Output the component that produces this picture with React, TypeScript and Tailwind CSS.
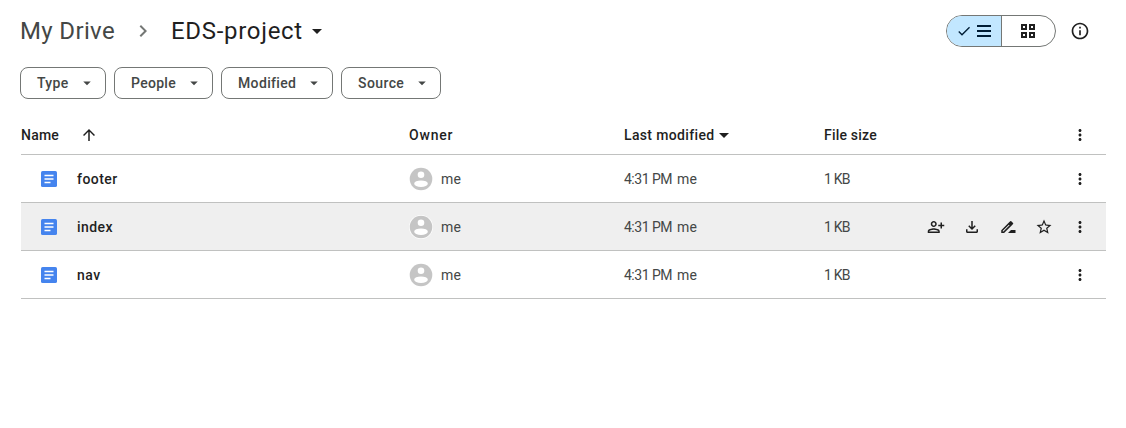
import type { ReactNode } from "react";

function Icon({ d, className = "size-5" }: { d: string; className?: string }) {
  return (
    <svg viewBox="0 0 24 24" className={`shrink-0 ${className}`} fill="currentColor" aria-hidden="true">
      <path fillRule="evenodd" d={d} />
    </svg>
  );
}

const icons = {
  caret: "M7 10l5 5 5-5z",
  more: "M12 8c1.1 0 2-.9 2-2s-.9-2-2-2-2 .9-2 2 .9 2 2 2zm0 2c-1.1 0-2 .9-2 2s.9 2 2 2 2-.9 2-2-.9-2-2-2zm0 6c-1.1 0-2 .9-2 2s.9 2 2 2 2-.9 2-2-.9-2-2-2z",
  chevron: "M10 6 8.59 7.41 13.17 12l-4.58 4.59L10 18l6-6z",
  check: "M9 16.17 4.83 12l-1.42 1.41L9 19 21 7l-1.41-1.41z",
  arrowUp: "m4 12 1.41 1.41L11 7.83V20h2V7.83l5.58 5.59L20 12l-8-8-8 8z",
  info: "M11 7h2v2h-2zm0 4h2v6h-2zm1-9C6.48 2 2 6.48 2 12s4.48 10 10 10 10-4.48 10-10S17.52 2 12 2zm0 18c-4.41 0-8-3.59-8-8s3.59-8 8-8 8 3.59 8 8-3.59 8-8 8z",
  share:
    "M13 8c0-2.21-1.79-4-4-4S5 5.79 5 8s1.79 4 4 4 4-1.79 4-4zm-2 0c0 1.1-.9 2-2 2s-2-.9-2-2 .9-2 2-2 2 .9 2 2zM1 17.2V20h16v-2.8c0-2.4-5.33-3.7-8-3.7s-8 1.3-8 3.7zM3 18v-.7c.3-.8 3.3-1.8 6-1.8s5.7 1 6 1.8v.7zM20 14v-3h3V9h-3V6h-2v3h-3v2h3v3z",
  download:
    "M18 15v3H6v-3H4v3c0 1.1.9 2 2 2h12c1.1 0 2-.9 2-2v-3h-2zm-1-4-1.41-1.41L13 12.17V4h-2v8.17L8.41 9.59 7 11l5 5 5-5z",
  rename:
    "M16 16l-4 4h10v-4zM13.2 6.1 3 16.25V20h3.75L16.9 9.85zM5.92 18H5v-.92l8.2-8.2.92.92zM18.71 8.04a.996.996 0 0 0 0-1.41l-2.34-2.34a1.001 1.001 0 0 0-1.41 0L13.2 6.1l3.75 3.75z",
  star: "m22 9.24-7.19-.62L12 2 9.19 8.63 2 9.24l5.46 4.73L5.82 21 12 17.27 18.18 21l-1.63-7.03L22 9.24zM12 15.4l-3.76 2.27 1-4.28-3.32-2.88 4.38-.38L12 6.1l1.71 4.04 4.38.38-3.32 2.88 1 4.28L12 15.4z",
};

function Chip({ label, className }: { label: string; className: string }) {
  return (
    <button
      className={`flex h-8 items-center justify-between rounded-lg border border-[#747775] pr-[9px] pl-4 text-sm font-[470] text-[#444746] ${className}`}
    >
      {label}
      <Icon d={icons.caret} className="size-[18px]" />
    </button>
  );
}

function DocIcon() {
  return (
    <svg viewBox="0 0 16 16" className="size-4 shrink-0" aria-hidden="true">
      <rect width="16" height="16" rx="1.6" fill="#4584ee" />
      <path d="M3.5 4.5h9M3.5 8h9M3.5 11.5h6" stroke="#fff" strokeWidth="1.5" />
    </svg>
  );
}

function Avatar() {
  return (
    <svg viewBox="0 0 24 24" className="size-6 shrink-0" aria-hidden="true">
      <circle cx="12" cy="12" r="12" fill="#fff" />
      <circle cx="12" cy="12" r="11.3" fill="#c5c5c5" />
      <circle cx="12" cy="7.7" r="3.3" fill="#fff" />
      <ellipse cx="12" cy="16.7" rx="6.8" ry="3.3" fill="#fff" />
    </svg>
  );
}

function Action({ children }: { children: ReactNode }) {
  return <span className="flex w-9 justify-center">{children}</span>;
}

const columns = "grid grid-cols-[388px_215px_200px_1fr] items-center border-b border-[#c0c1c0] text-sm";

function FileRow({ name, active = false }: { name: string; active?: boolean }) {
  return (
    <div className={`h-12 ${columns} ${active ? "bg-[#efefef]" : ""}`}>
      <div className="flex items-center gap-5 pl-5 font-[470] text-[#1f1f1f]">
        <DocIcon />
        <span className="tracking-[0.45px]">{name}</span>
      </div>
      <div className="flex items-center gap-2 text-[#444746]">
        <Avatar />
        <span className="tracking-[0.2px]">me</span>
      </div>
      <div className="flex text-[#444746]">
        <span className="w-[53px] tracking-[-0.5px] whitespace-nowrap">4:31 PM</span>
        <span className="tracking-[0.2px]">me</span>
      </div>
      <div className="flex items-center justify-between pr-2">
        <span className="tracking-[-0.8px] text-[#444746]">1 KB</span>
        <div className="flex text-[#1f1f1f]">
          {active && (
            <>
              <Action><Icon d={icons.share} className="size-[18px]" /></Action>
              <Action><Icon d={icons.download} className="size-[18px]" /></Action>
              <Action><Icon d={icons.rename} className="size-[18px]" /></Action>
              <Action><Icon d={icons.star} className="size-[18px]" /></Action>
            </>
          )}
          <Action><Icon d={icons.more} className="size-[18px]" /></Action>
        </div>
      </div>
    </div>
  );
}

export default function App() {
  return (
    <main className="h-[428px] bg-white pl-5 font-['Roboto','Noto_Sans',sans-serif]">
      <header className="flex h-[62px] items-center justify-between pr-9">
        <nav className="flex items-center text-2xl">
          <span className="w-[111px] tracking-[0.35px] whitespace-nowrap text-[#444746]">My Drive</span>
          <Icon d={icons.chevron} className="size-6 text-[#747775]" />
          <span className="ml-4 w-[134px] tracking-[0.7px] whitespace-nowrap text-[#1f1f1f]">EDS-project</span>
          <Icon d={icons.caret} className="size-6 text-[#1f1f1f]" />
        </nav>
        <div className="flex items-center gap-3.5">
          <div className="flex h-8 w-[110px] overflow-hidden rounded-full border border-[#747775]">
            <div className="flex w-[55px] items-center gap-[5px] border-r border-[#747775] bg-[#c2e7ff] pl-[9px] text-[#001d35]">
              <Icon d={icons.check} className="size-4" />
              <svg viewBox="0 0 14 12" className="h-3 w-3.5" aria-hidden="true">
                <path d="M0 1h14M0 6h14M0 11h14" stroke="currentColor" strokeWidth="2" />
              </svg>
            </div>
            <div className="flex flex-1 items-center justify-center pr-px text-[#1f1f1f]">
              <svg viewBox="0 0 14 14" className="size-3.5" fill="none" stroke="currentColor" strokeWidth="2" aria-hidden="true">
                <path d="M1 1h4v4H1zM9 1h4v4H9zM1 9h4v4H1zM9 9h4v4H9z" />
              </svg>
            </div>
          </div>
          <Icon d={icons.info} className="size-5 text-[#1f1f1f]" />
        </div>
      </header>

      <div className="mt-[5px] flex gap-2">
        <Chip label="Type" className="w-[86px] tracking-[0.3px]" />
        <Chip label="People" className="w-[99px] tracking-[0.3px]" />
        <Chip label="Modified" className="w-[112px] tracking-[0.35px]" />
        <Chip label="Source" className="w-[100px] tracking-[0.4px]" />
      </div>

      <section className="mt-4 mr-5 ml-px">
        <div className={`h-10 ${columns} font-[470] text-[#1f1f1f]`}>
          <div className="flex items-center">
            <span className="w-[59px] tracking-[0.2px]">Name</span>
            <Icon d={icons.arrowUp} className="size-[18px]" />
          </div>
          <span className="tracking-[0.8px]">Owner</span>
          <div className="flex items-center">
            <span className="w-[88px] tracking-[0.35px] whitespace-nowrap">Last modified</span>
            <Icon d={icons.caret} className="size-6" />
          </div>
          <div className="flex items-center justify-between pr-2">
            <span className="tracking-[0.2px]">File size</span>
            <Action><Icon d={icons.more} className="size-[18px]" /></Action>
          </div>
        </div>
        <FileRow name="footer" />
        <FileRow name="index" active />
        <FileRow name="nav" />
      </section>
    </main>
  );
}
